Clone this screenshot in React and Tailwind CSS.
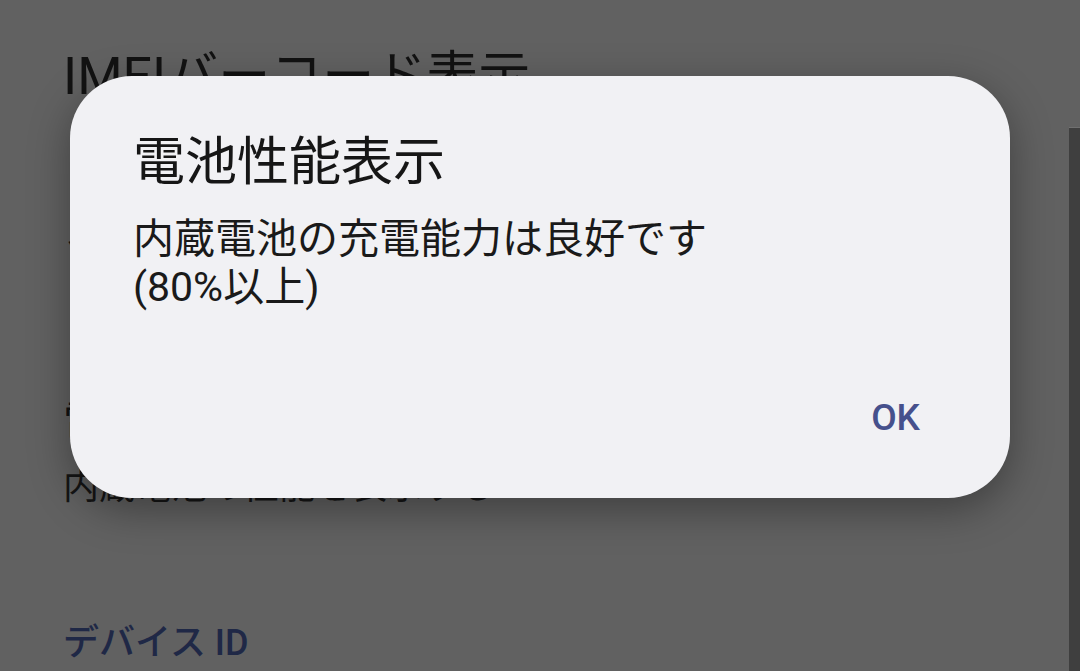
export default function App() {
  const jp = { fontFamily: '"Noto Sans CJK JP", "Noto Sans", sans-serif' };
  const mix = { fontFamily: 'Roboto, "Noto Sans CJK JP", sans-serif' };
  return (
    <div className="relative w-[1080px] h-[671px] overflow-hidden bg-[#616161]">
      <div className="flex h-full">
        <div className="flex-1 flex flex-col pl-[63px] pt-[47px]" style={mix}>
          <div className="text-[52px] leading-[60px] text-[#121212]">IMEIバーコード表示</div>
          <div className="mt-[122px] text-[44px] leading-[56px] text-[#121212]">ソフトウェア情報</div>
          <div className="mt-[110px] text-[44px] leading-[56px] text-[#121212]">電池性能表示</div>
          <div className="mt-[14px] text-[36px] leading-[44px] text-[#151515]">内蔵電池の性能を表示する</div>
          <div className="mt-[112px] text-[36px] leading-[44px] font-medium text-[#1f2846]">デバイス ID</div>
        </div>
        <div className="w-[11px] mt-[127px] bg-[#3f3f3f] border-t border-[#707070]"></div>
      </div>

      <div className="absolute left-[70px] top-[76px] w-[940px] h-[422px] rounded-[62px] bg-[#f1f1f4] shadow-[0_12px_40px_rgba(0,0,0,0.35)] flex flex-col pl-[63px] pr-[90px] pt-[127px]">
        <div className="absolute left-[63px] top-[52px] text-[52px] leading-[60px] text-[#161616]" style={jp}>電池性能表示</div>
        <div className="mt-[12px] text-[41px] leading-[48px] text-[#1a1a1a]" style={mix}>
          内蔵電池の充電能力は良好です
          <br />
          (80%以上)
        </div>
        <div className="mt-auto mb-[58px] flex justify-end">
          <span className="text-[37px] leading-[44px] font-medium text-[#46508c]" style={{ fontFamily: 'Roboto, sans-serif' }}>OK</span>
        </div>
      </div>
    </div>
  );
}
